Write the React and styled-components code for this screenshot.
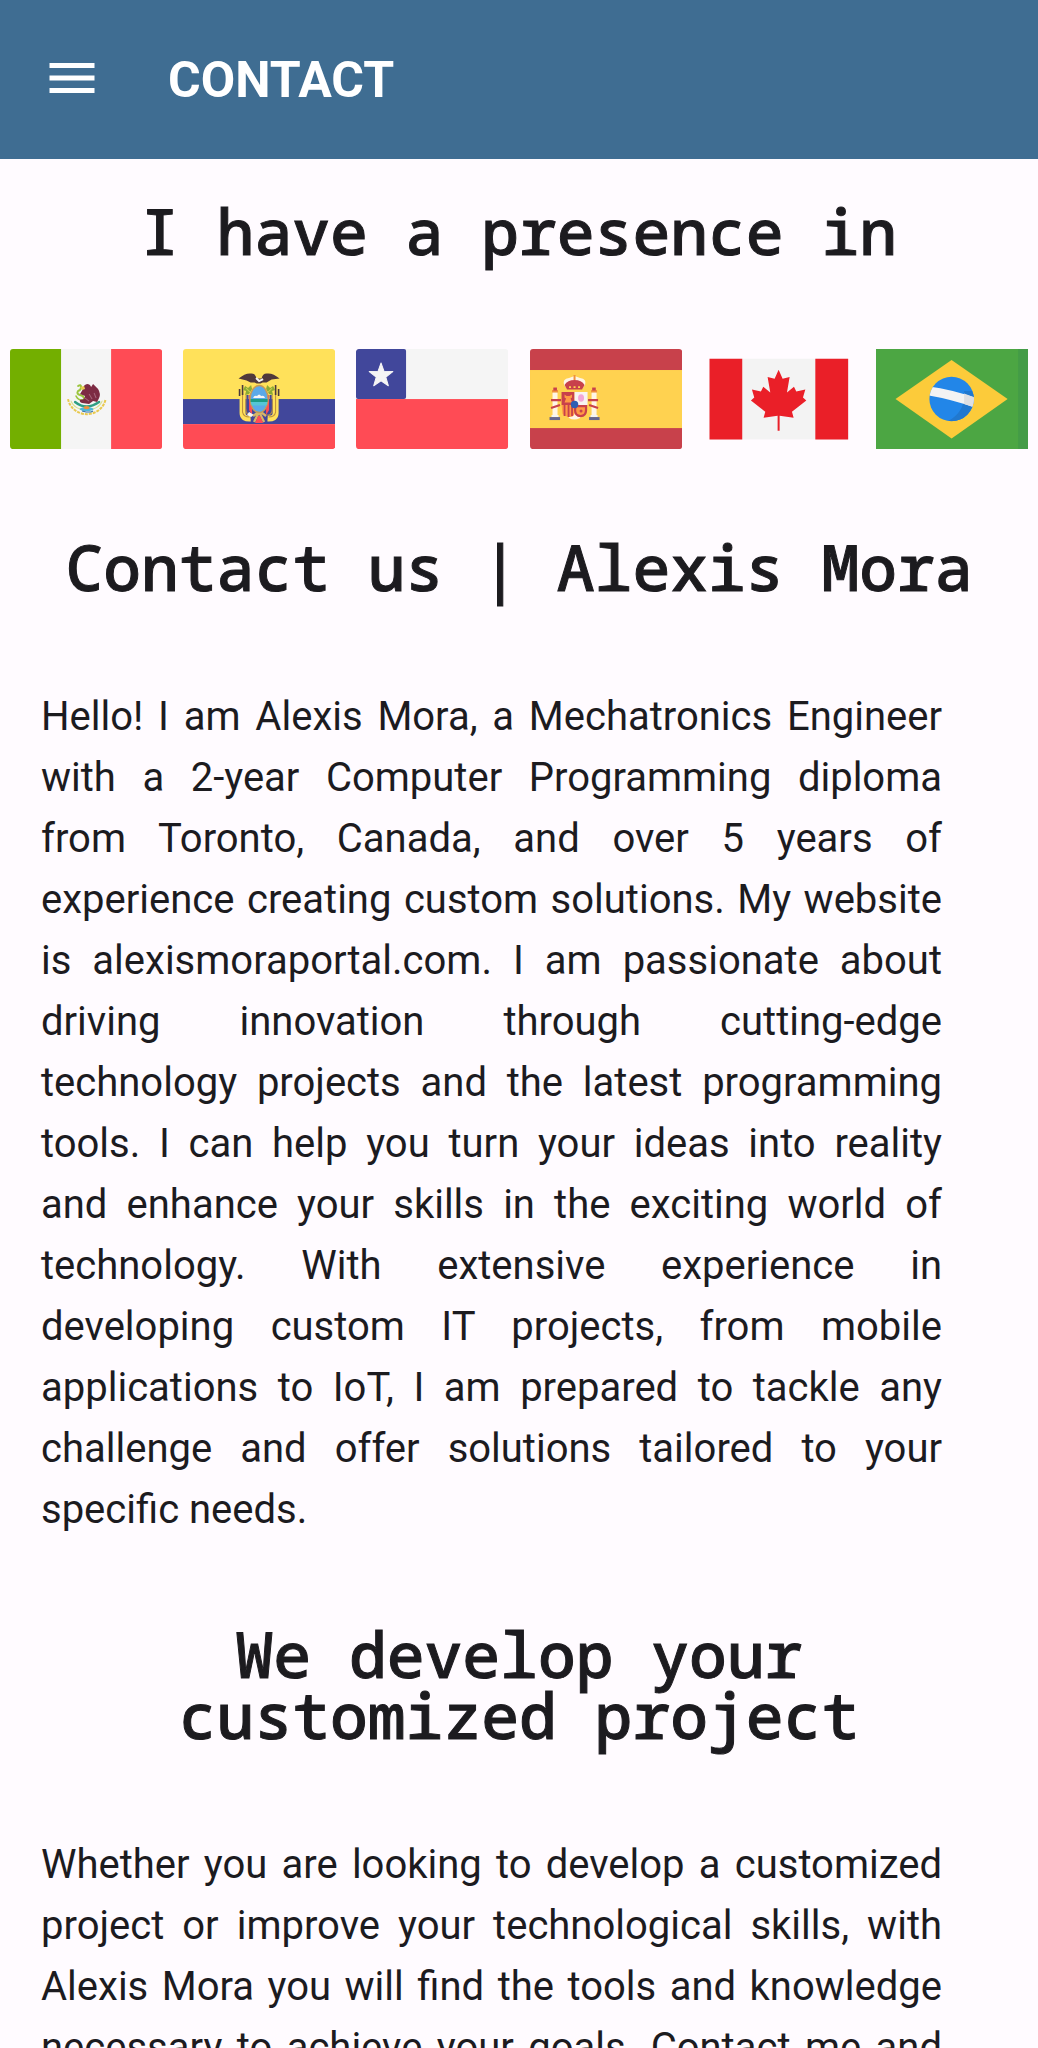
import React from "react";
import styled, { createGlobalStyle } from "styled-components";

const GlobalStyle = createGlobalStyle`
  * { box-sizing: border-box; }
  body { margin: 0; background: #fffbff; }
`;

const Screen = styled.div`
  display: flex;
  flex-direction: column;
  height: 100vh;
  color: #1c1b1f;
  font-family: Roboto, sans-serif;
`;

const TopBar = styled.header`
  display: flex;
  align-items: flex-start;
  gap: 66px;
  flex: none;
  padding: 48px 42px 47px;
  background: #3f6d92;
  color: #fff;
`;

const MenuButton = styled.button`
  display: block;
  padding: 0;
  border: 0;
  background: none;
  color: inherit;
  cursor: pointer;

  svg { display: block; }
`;

const Title = styled.h1`
  margin: 0;
  font-size: 50px;
  line-height: 64px;
  font-weight: 700;
`;

const Content = styled.main`
  flex: 1;
  min-height: 0;
  overflow-y: auto;
  scrollbar-width: none;
`;

const Heading = styled.h2`
  margin: 0;
  padding: 41px 42px 0;
  text-align: center;
  font-family: "Noto Sans Mono", "DejaVu Sans Mono", monospace;
  font-size: 63px;
  line-height: 61px;
  font-weight: 500;
  -webkit-text-stroke: 1px currentColor;
`;

const Flags = styled.ul`
  display: grid;
  grid-template-columns: repeat(6, 1fr);
  gap: 21px;
  margin: 0;
  padding: 88px 10px 46px;
  list-style: none;
`;

const FlagImage = styled.svg`
  display: block;
  width: 100%;
`;

const Copy = styled.p`
  margin: 0;
  padding: 89px 96px 42px 41px;
  font-size: 40px;
  line-height: 61px;
`;

const Line = styled.span`
  display: block;
  text-align: justify;
  text-align-last: ${(p) => (p.$last ? "left" : "justify")};
`;

const INTRO = [
  "Hello! I am Alexis Mora, a Mechatronics Engineer",
  "with a 2-year Computer Programming diploma",
  "from Toronto, Canada, and over 5 years of",
  "experience creating custom solutions. My website",
  "is alexismoraportal.com. I am passionate about",
  "driving innovation through cutting-edge",
  "technology projects and the latest programming",
  "tools. I can help you turn your ideas into reality",
  "and enhance your skills in the exciting world of",
  "technology. With extensive experience in",
  "developing custom IT projects, from mobile",
  "applications to IoT, I am prepared to tackle any",
  "challenge and offer solutions tailored to your",
  "specific needs.",
];

const PROJECT = [
  "Whether you are looking to develop a customized",
  "project or improve your technological skills, with",
  "Alexis Mora you will find the tools and knowledge",
  "necessary to achieve your goals. Contact me and",
];

function Paragraph({ lines, continues = false }) {
  return (
    <Copy>
      {lines.map((line, i) => (
        <Line key={line} $last={!continues && i === lines.length - 1}>
          {line}{" "}
        </Line>
      ))}
    </Copy>
  );
}

function Flag({ name, round = true, children }) {
  const clip = `clip-${name}`;
  return (
    <li>
      <FlagImage viewBox="0 0 152 100" role="img" aria-label={name}>
        <clipPath id={clip}>
          <rect width="152" height="100" rx={round ? 3 : 0} />
        </clipPath>
        <g clipPath={`url(#${clip})`}>{children}</g>
      </FlagImage>
    </li>
  );
}

function Mexico() {
  return (
    <Flag name="Mexico">
      <rect width="152" height="100" fill="#f5f5f5" />
      <rect width="51" height="100" fill="#73af00" />
      <rect x="101" width="51" height="100" fill="#ff4b55" />
      <g fill="none" strokeLinecap="round">
        <path d="M58 50a19 18 0 0 0 37.500 0" stroke="#e8c94f" strokeWidth="2" strokeDasharray="3 1" strokeLinecap="butt" />
        <path d="M61 52a16 12 0 0 0 31 0" stroke="#d9e08a" strokeWidth="1" />
        <path d="M65 53q11 9 24 0" stroke="#2f9e83" strokeWidth="2.400" />
        <path d="M68 37q3-2 3 1t-3 4q-2 3 2 4t4 4" stroke="#9bc53d" strokeWidth="2" />
        <path d="M66 47q2 4 6 4" stroke="#9bc53d" strokeWidth="1.500" />
      </g>
      <path d="M73 40q0-4 4-5q3 0 4 3l2-3l5 5q3 5 1 9l-2 4l-4-1l-4 3l-7-1q-3-1-2-3l4-1l1-3l-5-2z" fill="#7d2b43" />
      <path d="M79 45l3 5M84 44l2 5M75 49l4 3" stroke="#a5667a" strokeWidth="1" />
      <path d="M70 38l4-1l1 3l-3 1z" fill="#e8c94f" />
      <ellipse cx="76.500" cy="60" rx="7" ry="2" fill="#4fb7d9" />
      <ellipse cx="76.500" cy="58.500" rx="3" ry="1.600" fill="#f0903c" />
      <path d="M72 62l4 1h5l2-1" stroke="#2f6fa8" strokeWidth="1" fill="none" />
    </Flag>
  );
}

function EcuadorSide() {
  return (
    <>
      <path d="M59.500 46v18q0 6 8 5.500" fill="none" stroke="#ffe15a" strokeWidth="6" />
      <path d="M59.500 44v19q1 5 7 5M63 46v16q1 4 5 4" fill="none" stroke="#b98b3c" strokeWidth="1" />
      <path d="M66 46v15l3 5v-20z" fill="#ff4b55" />
      <path d="M63.500 46v14l2 3v-17z" fill="#41479b" />
      <path d="M56.500 40v7M59.500 36v10" stroke="#4b3a3c" strokeWidth="1.600" />
      <path d="M62 37l3 2l3-3l1 4l-3 5l-4 1l1-4l-3-1z" fill="#8cab35" />
      <path d="M63 39l4 4" stroke="#c9cf4d" />
    </>
  );
}

function Ecuador() {
  return (
    <Flag name="Ecuador">
      <rect width="152" height="51" fill="#ffe15a" />
      <rect y="50" width="152" height="25" fill="#41479b" />
      <rect y="75" width="152" height="25" fill="#ff4b55" />
      <EcuadorSide />
      <g transform="matrix(-1 0 0 1 152 0)"><EcuadorSide /></g>
      <path d="M66 63l-2 3l4 2l3-2z" fill="#f5f5f5" />
      <path d="M76 63l-5 10M76 63l5 10M70 67l4-3h5l4 3" stroke="#d6b468" strokeWidth="2.400" fill="none" />
      <path d="M75 67h2l3 7h-8z" fill="#ff4b55" />
      <ellipse cx="76" cy="50" rx="9" ry="13.500" fill="#5ba9e8" stroke="#c79a55" strokeWidth="1.400" />
      <path d="M67.500 50h17v3h-17z" fill="#1c9c86" />
      <path d="M67.700 53h16.600l-1 3.500h-14.600z" fill="#55c6d6" />
      <path d="M70 49q1-3 4-2q2-3 4 0q3-1 4 2z" fill="#f5f5f5" />
      <path d="M55.500 29.500q7-6 13-5q4 0 5 5h5q1-5 5-5q6-1 13 5l-8 1l-5 3h-4l-2 1h-4l-2-1h-4l-4-2z" fill="#50393b" />
      <path d="M73 29l3 3l4-2" fill="none" stroke="#f5f5f5" strokeWidth="2" />
    </Flag>
  );
}

function Chile() {
  return (
    <Flag name="Chile">
      <rect width="152" height="100" fill="#f5f5f5" />
      <rect y="50" width="152" height="50" fill="#ff4b55" />
      <rect width="50" height="50" rx="2" fill="#41479b" />
      <path
        d="M25 14l3 8.300 8.800.3-7 5.500 2.500 8.600-7.300-5-7.300 5 2.500-8.600-7-5.500 8.800-.3z"
        fill="#f5f5f5"
        stroke="#f5f5f5"
        strokeLinejoin="round"
      />
    </Flag>
  );
}

function SpainPillar() {
  return (
    <>
      <rect x="22.500" y="43" width="5" height="25" fill="#fff5e6" />
      <rect x="22" y="41" width="6" height="2.500" fill="#f0903c" />
      <rect x="23.300" y="38.500" width="3.600" height="3" fill="#c8414b" />
      <path d="M21 51h10M21 59l9-3" stroke="#c8414b" strokeWidth="2.200" />
      <rect x="21.500" y="66" width="7" height="2" fill="#f5f5f5" />
      <rect x="19.500" y="68" width="10.500" height="3" fill="#66668f" />
    </>
  );
}

function Spain() {
  return (
    <Flag name="Spain">
      <rect width="152" height="100" fill="#c8414b" />
      <rect y="21" width="152" height="58" fill="#ffd250" />
      <SpainPillar />
      <g transform="matrix(-1 0 0 1 89 0)"><SpainPillar /></g>
      <path d="M34 36q-2-6 5-7l5.500-2 5.500 2q7 1 5 7l-3 4h-15z" fill="#fff5e6" />
      <path d="M34.500 36q3-5 10-5t10 5l-2.500 4.500h-15z" fill="#c8414b" />
      <path d="M44.500 26v5" stroke="#f0903c" strokeWidth="2" />
      <path d="M39 38h2M43.500 38h2M48 38h2" stroke="#ffd250" strokeWidth="1.800" />
      <path d="M37 64l2 5q5 3 11 0l3-5z" fill="#fff5e6" />
      <path d="M31.500 43h13v13h-13z" fill="#c8414b" />
      <path d="M34.500 45.500l2 1.500h3l2.500-1.500v3l-1.500 1 1.500 4h-7.500l1.500-4-1.500-1z" fill="#ff9a45" />
      <path d="M44.500 43H57.500v13h-13z" fill="#f8f3f2" />
      <ellipse cx="51" cy="49" rx="3" ry="3.800" fill="#f3a6d7" />
      <path d="M31.500 56h13v9q-1 3-5 3t-7-3z" fill="#ff9a45" />
      <path d="M34.500 56v11M38.500 56v12M42 56v11" stroke="#c8414b" strokeWidth="1.800" />
      <path d="M45.500 57H56v4q0 6-5.500 6t-5.500-6z" fill="#ff9a45" stroke="#c8414b" strokeWidth="2.200" />
      <circle cx="51" cy="62" r="1.500" fill="#c8414b" />
      <circle cx="44.500" cy="55.500" r="3.700" fill="#2f5fb3" />
    </Flag>
  );
}

function Canada() {
  return (
    <Flag name="Canada" round={false}>
      <rect x="6.500" y="9.700" width="138.500" height="80.600" fill="#f3f3f3" />
      <path d="M6.500 9.700h32.700v80.600H6.500zM112.200 9.700h32.800v80.600h-32.800z" fill="#ea1f28" />
      <path
        transform="translate(-12.800 -19) scale(.33333)"
        d="M265 119l12 27 21-5-8 46 21-17 7 14 27-6-7 24 10 9-43 34 5 18-42-6v45h-6v-45l-42 6 5-18-43-34 10-9-7-24 27 6 7-14 21 17-8-46 21 5z"
        fill="#ea1f28"
      />
    </Flag>
  );
}

function Brazil() {
  return (
    <Flag name="Brazil" round={false}>
      <rect width="152" height="100" fill="#4ca643" />
      <rect x="142" width="10" height="100" fill="#449c47" />
      <path d="M19.500 50L75.500 11l56 39-56 39.500z" fill="#fccb3a" />
      <clipPath id="globe"><circle cx="75.500" cy="50" r="22.200" /></clipPath>
      <g clipPath="url(#globe)">
        <rect x="53" y="27" width="45" height="46" fill="#2286e8" />
        <path d="M98 42v30H72q18-10 16-30z" fill="#2078cf" />
        <path d="M50 37q25 3 50 12v10q-25-9-50-13z" fill="#f3f3f3" />
        <path d="M88 44.500l12 4.500v10l-12-4z" fill="#dedfe2" />
      </g>
    </Flag>
  );
}

export default function App() {
  return (
    <Screen>
      <GlobalStyle />
      <TopBar>
        <MenuButton type="button" aria-label="Open menu">
          <svg width="60" height="60" viewBox="0 0 24 24" fill="currentColor">
            <path d="M3 18h18v-2H3v2zm0-5h18v-2H3v2zm0-7v2h18V6H3z" />
          </svg>
        </MenuButton>
        <Title>CONTACT</Title>
      </TopBar>
      <Content>
        <Heading>I have a presence in</Heading>
        <Flags>
          <Mexico />
          <Ecuador />
          <Chile />
          <Spain />
          <Canada />
          <Brazil />
        </Flags>
        <Heading>Contact us | Alexis Mora</Heading>
        <Paragraph lines={INTRO} />
        <Heading>We develop your customized project</Heading>
        <Paragraph lines={PROJECT} continues />
      </Content>
    </Screen>
  );
}
